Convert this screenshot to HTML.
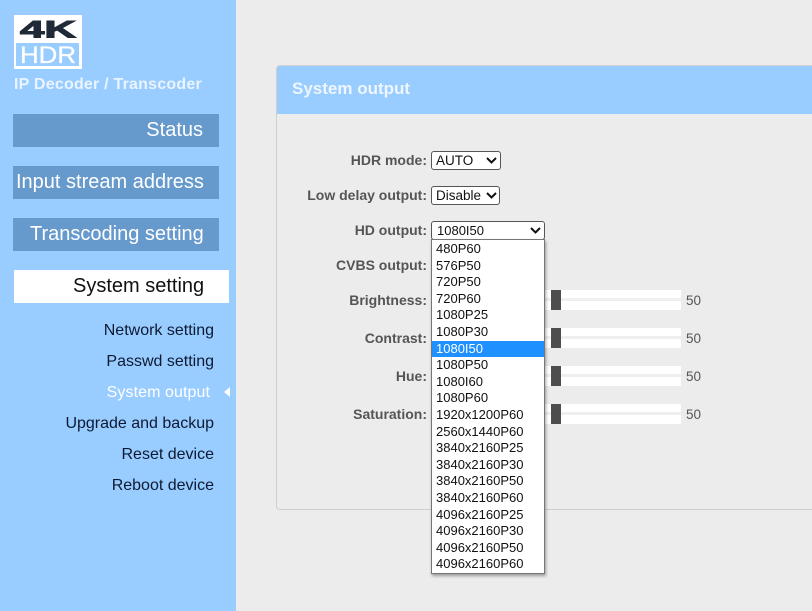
<!DOCTYPE html>
<html><head><meta charset="utf-8">
<style>
html,body{margin:0;padding:0}
body{width:812px;height:611px;overflow:hidden;position:relative;background:#ececec;font-family:"Liberation Sans",Arial,sans-serif}
.a{position:absolute;white-space:nowrap}
#side{position:absolute;left:0;top:0;width:236px;height:611px;background:#99ccff}
.nav{position:absolute;left:13px;width:206px;height:33px;background:#6699cc;color:#fff;font-size:20px;line-height:33px;box-sizing:border-box}
.sub{position:absolute;right:22px;font-size:16px;line-height:18px;color:#0d1a33;white-space:nowrap}
.lab{position:absolute;right:385px;font-size:14px;font-weight:bold;color:#555;line-height:18px;white-space:nowrap}
.sel{position:absolute;box-sizing:border-box;height:19px;background:#fff;border:1px solid #555;border-radius:3px;font-size:13.5px;line-height:17px;color:#111;padding-left:4px}
.sel svg{position:absolute;top:5px}
.track{position:absolute;left:545px;width:136px;height:20px;background:#fff}
.track i{position:absolute;left:0;right:0;top:8px;height:3px;background:#efefef}
.track b{position:absolute;left:6px;top:0;width:10px;height:20px;background:#4d4d4d}
.val{position:absolute;left:686px;font-size:13.5px;line-height:16px;color:#555}
#dd{position:absolute;left:431px;top:239px;width:114px;height:335px;box-sizing:border-box;background:#fff;border:1px solid #767676;box-shadow:1px 2px 3px rgba(0,0,0,.35);padding-top:1px}
#dd div{height:16.6px;line-height:16.6px;font-size:13px;color:#111;padding-left:4px}
#dd div.on{background:#1e90ff;color:#fff}
</style></head><body>
<div id="side">
<svg class="a" style="left:14px;top:15px" width="68" height="54" viewBox="0 0 68 54">
<rect width="68" height="54" fill="#fff"/>
<text x="6" y="22.5" font-family="Liberation Sans" font-weight="bold" font-size="24" fill="#1f2937" stroke="#1f2937" stroke-width="1" textLength="56" lengthAdjust="spacingAndGlyphs">4K</text>
<rect x="2" y="28" width="63" height="23" fill="#99ccff"/>
<text x="6" y="48" font-family="Liberation Sans" font-size="24" fill="#fff" stroke="#fff" stroke-width=".3" textLength="56" lengthAdjust="spacingAndGlyphs">HDR</text>
</svg>
<div class="a" style="left:14px;top:75px;font-size:16px;line-height:19px;font-weight:bold;color:#eaf4ff;letter-spacing:.22px">IP Decoder / Transcoder</div>
<div class="nav" style="top:114px;text-align:right;padding-right:16px">Status</div>
<div class="nav" style="top:166px;padding-left:3px">Input stream address</div>
<div class="nav" style="top:218px;padding-left:17px">Transcoding setting</div>
<div class="nav" style="top:270px;left:14px;width:215px;background:#fff;color:#111;padding-left:59px">System setting</div>
<div class="sub" style="top:322px">Network setting</div>
<div class="sub" style="top:353px">Passwd setting</div>
<div class="sub" style="top:384px;right:26px;color:#fff;letter-spacing:.08px">System output</div>
<svg class="a" style="left:224px;top:387px" width="6" height="10"><path d="M6 0V10L0 5Z" fill="#fff"/></svg>
<div class="sub" style="top:415px">Upgrade and backup</div>
<div class="sub" style="top:446px">Reset device</div>
<div class="sub" style="top:477px">Reboot device</div>
</div>

<div class="a" style="left:276px;top:65px;width:560px;height:445px;box-sizing:border-box;border:1px solid #cfcfcf;border-radius:4px;background:#ececec"></div>
<div class="a" style="left:277px;top:66px;width:535px;height:48px;background:#99ccff;border-radius:3px 0 0 0"></div>
<div class="a" style="left:292px;top:79px;font-size:17px;line-height:20px;font-weight:bold;color:#eef6ff">System output</div>

<div class="lab" style="top:151px">HDR mode:</div>
<div class="lab" style="top:186px">Low delay output:</div>
<div class="lab" style="top:221px">HD output:</div>
<div class="lab" style="top:256px">CVBS output:</div>
<div class="lab" style="top:291px">Brightness:</div>
<div class="lab" style="top:329px">Contrast:</div>
<div class="lab" style="top:367px">Hue:</div>
<div class="lab" style="top:405px">Saturation:</div>

<div class="sel" style="left:431px;top:151px;width:70px">AUTO<svg style="left:54px" width="11" height="7"><path d="M1 1L5.5 5.5L10 1" fill="none" stroke="#111" stroke-width="2"/></svg></div>
<div class="sel" style="left:431px;top:186px;width:69px">Disable<svg style="left:54px" width="11" height="7"><path d="M1 1L5.5 5.5L10 1" fill="none" stroke="#111" stroke-width="2"/></svg></div>
<div class="sel" style="left:431px;top:221px;width:114px;padding-left:5px;font-size:13px">1080I50<svg style="left:98px" width="11" height="7"><path d="M1 1L5.5 5.5L10 1" fill="none" stroke="#111" stroke-width="2"/></svg></div>

<div class="track" style="top:290px"><i></i><b></b></div><div class="val" style="top:293px">50</div>
<div class="track" style="top:328px"><i></i><b></b></div><div class="val" style="top:331px">50</div>
<div class="track" style="top:366px"><i></i><b></b></div><div class="val" style="top:369px">50</div>
<div class="track" style="top:404px"><i></i><b></b></div><div class="val" style="top:407px">50</div>

<div id="dd">
<div>480P60</div><div>576P50</div><div>720P50</div><div>720P60</div><div>1080P25</div><div>1080P30</div><div class="on">1080I50</div><div>1080P50</div><div>1080I60</div><div>1080P60</div><div>1920x1200P60</div><div>2560x1440P60</div><div>3840x2160P25</div><div>3840x2160P30</div><div>3840x2160P50</div><div>3840x2160P60</div><div>4096x2160P25</div><div>4096x2160P30</div><div>4096x2160P50</div><div>4096x2160P60</div>
</div>
</body></html>
